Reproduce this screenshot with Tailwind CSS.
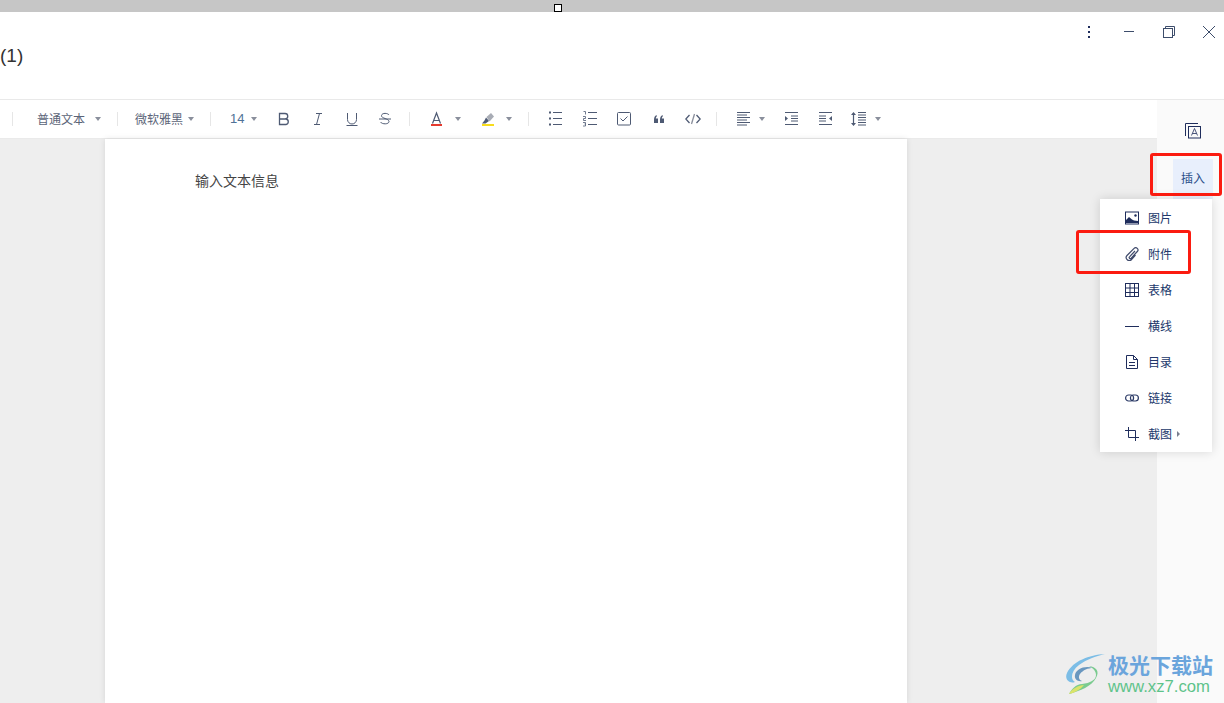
<!DOCTYPE html>
<html lang="zh-CN">
<head>
<meta charset="UTF-8"/>
<title>文档</title>
<script src="https://cdn.jsdelivr.net/npm/@tailwindcss/browser@4"></script>
</head>
<body class="relative h-[703px] w-[1224px] overflow-hidden bg-white font-['Noto_Sans_CJK_SC','Liberation_Sans',sans-serif]">

<!-- top strip with resize handle -->
<div class="relative h-3 bg-[#c6c6c6]">
  <div class="absolute left-[554px] top-1 h-2 w-2 border border-black bg-white"></div>
</div>

<!-- title bar -->
<header class="relative h-[88px] border-b border-[#e9e9e9]">
  <span class="absolute left-0 top-[32px] text-[19px] leading-6 text-[#333] font-['Liberation_Sans',sans-serif]">(1)</span>
  <div class="absolute left-[1082px] top-[12px] flex items-center">
    <svg class="h-4 w-4" viewBox="0 0 16 16" fill="#1f2d5c"><rect x="6" y="2" width="2" height="2"/><rect x="6" y="7" width="2" height="2"/><rect x="6" y="12" width="2" height="2"/></svg>
    <svg class="ml-[24px] h-4 w-4" viewBox="0 0 16 16" stroke="#3d4d6b" fill="none"><path d="M2 7.500h10"/></svg>
    <svg class="ml-[24px] h-4 w-4" viewBox="0 0 16 16" stroke="#3d4d6b" fill="none"><rect x="1.500" y="4.500" width="9" height="9"/><path d="M3.500 4.500V2.500h9v9h-2"/></svg>
    <svg class="ml-[24px] h-4 w-4" viewBox="0 0 16 16" stroke="#3d4d6b" fill="none"><path d="M1 2l12 12M13 2L1 14"/></svg>
  </div>
</header>

<div class="flex h-[603px]">
  <div class="flex w-[1157px] flex-col">
    <!-- toolbar -->
    <div class="flex h-[39px] items-center border-b border-[#eaeaea] pl-3 text-xs text-[#5b6478]">
      <i class="h-[14px] w-px bg-[#e6e6e6]"></i>
      <span class="ml-[24px] w-12 whitespace-nowrap">普通文本</span>
      <i class="ml-[10px] h-0 w-0 border-x-[3px] border-t-[4px] border-x-transparent border-t-[#8a8f9c]"></i>
      <i class="ml-[16px] h-[14px] w-px bg-[#e6e6e6]"></i>
      <span class="ml-[17px] w-12 whitespace-nowrap">微软雅黑</span>
      <i class="ml-[5px] h-0 w-0 border-x-[3px] border-t-[4px] border-x-transparent border-t-[#8a8f9c]"></i>
      <i class="ml-[16px] h-[14px] w-px bg-[#e6e6e6]"></i>
      <span class="ml-[19px] w-[14px] text-[13px] text-[#4f7297] font-['Liberation_Sans',sans-serif]">14</span>
      <i class="ml-[7px] h-0 w-0 border-x-[3px] border-t-[4px] border-x-transparent border-t-[#8a8f9c]"></i>

      <svg class="ml-[19px] h-4 w-4" viewBox="0 0 16 16" fill="none" stroke="#4e5a73" stroke-width="1.300"><path d="M3.500 2.500h5.500a2.700 2.700 0 0 1 0 5.500h-5.500zM3.500 8h6.500a2.800 2.800 0 0 1 0 5.500h-6.500z"/></svg>
      <svg class="ml-[18px] h-4 w-4" viewBox="0 0 16 16" fill="none" stroke="#4e5a73"><path d="M6 2.500h6M4 13.500h6M9.500 2.500l-3 11"/></svg>
      <svg class="ml-[18px] h-4 w-4" viewBox="0 0 16 16" fill="none" stroke="#4e5a73"><path d="M3.500 2v6.500a4.500 4.500 0 0 0 9 0V2M2.500 14.500h11"/></svg>
      <svg class="ml-[17px] h-4 w-4" viewBox="0 0 16 16" fill="none" stroke="#4e5a73"><path d="M12 4c-1-2-7-2.500-7.500.5S12 7.500 12 10.500s-7 3-8.500.5M2 8h12"/></svg>
      <i class="ml-[16px] h-[14px] w-px bg-[#e6e6e6]"></i>

      <svg class="ml-[18px] h-4 w-4" viewBox="0 0 16 16" fill="none"><path d="M4.500 12.500L8.500 2l4 10.500M5.500 9.500h6" stroke="#4e5a73" stroke-width="1.200"/><rect x="3" y="13" width="11" height="2" fill="#e53a2e"/></svg>
      <i class="ml-[11px] h-0 w-0 border-x-[3px] border-t-[4px] border-x-transparent border-t-[#8a8f9c]"></i>
      <svg class="ml-[18px] h-4 w-4" viewBox="0 0 16 16"><path d="M7.500 6L12 2l3 3.500-4.500 5z" fill="#a8acb5"/><path d="M3 12.500l2.500-3 1.500-3 3 3.500-3.500 2.500z" fill="#4e5a73"/><rect x="3" y="13" width="12" height="2" fill="#f8dc1c"/></svg>
      <i class="ml-[11px] h-0 w-0 border-x-[3px] border-t-[4px] border-x-transparent border-t-[#8a8f9c]"></i>
      <i class="ml-[16px] h-[14px] w-px bg-[#e6e6e6]"></i>

      <svg class="ml-[18px] h-4 w-4" viewBox="0 0 16 16" fill="none" stroke="#4e5a73"><path d="M6 1.500h9M6 7.500h9M6 13.500h9"/><path d="M2 1.500h2M2 7.500h2M2 13.500h2" stroke-width="2"/></svg>
      <svg class="ml-[18px] h-4 w-4" viewBox="0 0 16 16" fill="none" stroke="#4e5a73"><path d="M7 1.500h9M7 7.500h9M7 13.500h9"/><path d="M2.500 0.500h2v3M2 5.500h2.500v2h-2v2h2.500M2 11.500h2.500v1.500h-1M4.500 13v2h-2.500" stroke-width="0.800"/></svg>
      <svg class="ml-[19px] h-4 w-4" viewBox="0 0 16 16" fill="none" stroke="#4e5a73"><rect x="1.500" y="1.500" width="13" height="12.500" rx="1"/><path d="M4.500 7.500l2.500 2.500 4.500-4.500"/></svg>
      <svg class="ml-[19px] h-4 w-4" viewBox="0 0 16 16" fill="#4e5a73"><path d="M3 9c0-2.500.8-4.300 2.700-5v1.500C5 6 4.800 6.700 4.800 7.500H7V12H3zM9 9c0-2.500.8-4.300 2.700-5v1.500c-.7.500-.9 1.200-.9 2H13V12H9z"/></svg>
      <svg class="ml-[18px] h-4 w-4" viewBox="0 0 16 16" fill="none" stroke="#4e5a73" stroke-width="1.300"><path d="M4.500 4L0.800 8l3.700 4M11.500 4l3.700 4-3.700 4"/><path d="M9.500 3l-3 10" stroke="#8a8f9c"/></svg>
      <i class="ml-[15px] h-[14px] w-px bg-[#e6e6e6]"></i>

      <svg class="ml-[18px] h-4 w-4" viewBox="0 0 16 16" fill="none" stroke="#4e5a73"><path d="M2 1.500h13M2 4h10M2 6.500h13M2 9h10M2 11.500h13M2 14h10"/></svg>
      <i class="ml-[8px] h-0 w-0 border-x-[3px] border-t-[4px] border-x-transparent border-t-[#8a8f9c]"></i>
      <svg class="ml-[18px] h-4 w-4" viewBox="0 0 16 16" fill="none" stroke="#4e5a73"><path d="M2 1.500h13M8 5h7M8 7.500h7M8 10h7M2 13.500h13"/><path d="M2 5v5l3-2.500z" fill="#4e5a73" stroke="none"/></svg>
      <svg class="ml-[18px] h-4 w-4" viewBox="0 0 16 16" fill="none" stroke="#4e5a73"><path d="M2 1.500h13M2 5h7M2 7.500h7M2 10h7M2 13.500h13"/><path d="M15 5v5l-3-2.500z" fill="#4e5a73" stroke="none"/></svg>
      <svg class="ml-[17px] h-4 w-4" viewBox="0 0 16 16" fill="none" stroke="#4e5a73"><path d="M8 1.500h8M8 4h8M8 6.500h8M8 9h8M8 11.500h8M8 14h8"/><path d="M3.500 2v12" stroke-width="1.200"/><path d="M1 4l2.500-3L6 4zM1 12l2.500 3L6 12z" fill="#4e5a73" stroke="none"/></svg>
      <i class="ml-[9px] h-0 w-0 border-x-[3px] border-t-[4px] border-x-transparent border-t-[#8a8f9c]"></i>
    </div>

    <!-- document area -->
    <main class="flex-1 bg-[#eeeeee] pl-[105px]">
      <div class="h-full w-[802px] bg-white pl-[90px] pt-[31px] text-sm leading-5 text-[#444] shadow-[0_0_6px_rgba(0,0,0,0.1)]">输入文本信息</div>
    </main>
  </div>

  <!-- right rail -->
  <aside class="w-[67px] bg-[#fafafa] pl-[16px] pt-[23px]">
    <svg class="ml-[12px] h-4 w-4" viewBox="0 0 16 16" fill="none" stroke="#1f2d5c"><path d="M.5 13V.5H13"/><rect x="3.500" y="3.500" width="12" height="11.500"/><path d="M6.500 12.500l3-7 3 7M7.500 10.500h4" stroke-width=".8"/></svg>
    <div class="mt-[20px] flex h-10 w-10 items-center justify-center bg-[#e8effc] pb-[2px] text-xs text-[#2b4f8a]">插入</div>
  </aside>
</div>

<!-- insert menu -->
<div class="absolute left-[1100px] top-[199px] w-[112px] bg-white pt-px text-xs text-[#22386b] shadow-[0_0_10px_rgba(0,0,0,0.14)]">
  <div class="flex h-9 items-center pl-[25px]">
    <svg class="h-[14px] w-[14px]" viewBox="0 0 14 14"><rect x=".5" y="1" width="13" height="12" fill="none" stroke="#1f2d5c"/><path d="M1 12V9l3-3 3 2.500 2 1 4 .5V12z" fill="#1f2d5c"/><circle cx="10.500" cy="4.500" r="1.200" fill="#1f2d5c"/></svg>
    <span class="ml-[9px]">图片</span>
  </div>
  <div class="flex h-9 items-center pl-[25px]">
    <svg class="h-[14px] w-[14px]" viewBox="0 0 14 14" fill="none" stroke="#3f4a6b" stroke-width="1.200"><path d="M10 4l-5.500 5.800a1 1 0 0 0 1.500 1.500l6.300-6.800a2.200 2.200 0 0 0-3.200-3.100L2 8.500a3 3 0 0 0 4.500 4l4-4.500"/></svg>
    <span class="ml-[9px]">附件</span>
  </div>
  <div class="flex h-9 items-center pl-[25px]">
    <svg class="h-[14px] w-[14px]" viewBox="0 0 14 14" fill="none" stroke="#1f2d5c"><rect x=".5" y=".5" width="13" height="13"/><path d="M5 .5v13M9.500 .5v13M.5 5h13M.5 9.500h13"/></svg>
    <span class="ml-[9px]">表格</span>
  </div>
  <div class="flex h-9 items-center pl-[25px]">
    <svg class="h-[14px] w-[14px]" viewBox="0 0 14 14" fill="none" stroke="#1f2d5c"><path d="M0 7.500h14"/></svg>
    <span class="ml-[9px]">横线</span>
  </div>
  <div class="flex h-9 items-center pl-[25px]">
    <svg class="h-[14px] w-[14px]" viewBox="0 0 14 14" fill="none" stroke="#1f2d5c"><path d="M1.500 .5h7l4 4v9h-11zM8.500 .5v4h4M4 7.500h6M4 10.500h6"/></svg>
    <span class="ml-[9px]">目录</span>
  </div>
  <div class="flex h-9 items-center pl-[25px]">
    <svg class="h-[14px] w-[14px]" viewBox="0 0 14 14" fill="none" stroke="#2b3a66" stroke-width="1.200"><rect x=".6" y="4" width="8" height="6" rx="3"/><rect x="5.400" y="4" width="8" height="6" rx="3"/></svg>
    <span class="ml-[9px]">链接</span>
  </div>
  <div class="flex h-9 items-center pl-[25px]">
    <svg class="h-[14px] w-[14px]" viewBox="0 0 14 14" fill="none" stroke="#1f2d5c"><path d="M3.500 0v10.500H14M0 3.500h10.500V14"/></svg>
    <span class="ml-[9px]">截图</span>
    <i class="ml-[5px] h-0 w-0 border-y-[3px] border-l-[3px] border-y-transparent border-l-[#7a8090]"></i>
  </div>
</div>

<!-- red annotations -->
<div class="absolute left-[1150px] top-[153px] h-[43px] w-[72px] rounded-[3px] border-[3px] border-[#fb1b10]"></div>
<div class="absolute left-[1076px] top-[230px] h-[44px] w-[115px] rounded-[3px] border-[3px] border-[#fb1b10]"></div>

<!-- watermark -->
<div class="absolute left-[1065px] top-[652px] flex items-start">
  <svg class="mt-[1px] h-[42px] w-[42px]" viewBox="0 0 42 42" fill="none">
    <path d="M40 1C24 2 8 8 2 20c-3 7 3 11 8 9C5 26 6 18 14 12 22 6 32 3 40 1z" fill="#7cbde6"/>
    <path d="M28 15c-8-3-17 1-18 7-1 4 3 7 7 6-3-1-4-4-2-7 3-4 8-6 13-6z" fill="#6a97bf"/>
    <path d="M24 13c7 1 11 5 7 12-4 8-16 13-27 16 2-4 7-10 13-10 8-1 14-4 14-9 0-4-3-7-7-9z" fill="#7acb8f"/>
    <path d="M4 41c5-1 11-4 15-9-5 0-13 4-15 9z" fill="#dbe36a"/>
  </svg>
  <div class="ml-px">
    <div class="h-[26px] text-[21px] font-bold leading-[25px] text-[#6ba5dc]">极光下载站</div>
    <div class="h-[18px] text-[16.700px] leading-[18px] text-[#5ec38a] font-['Liberation_Sans',sans-serif]">www.xz7.com</div>
  </div>
</div>

</body>
</html>
